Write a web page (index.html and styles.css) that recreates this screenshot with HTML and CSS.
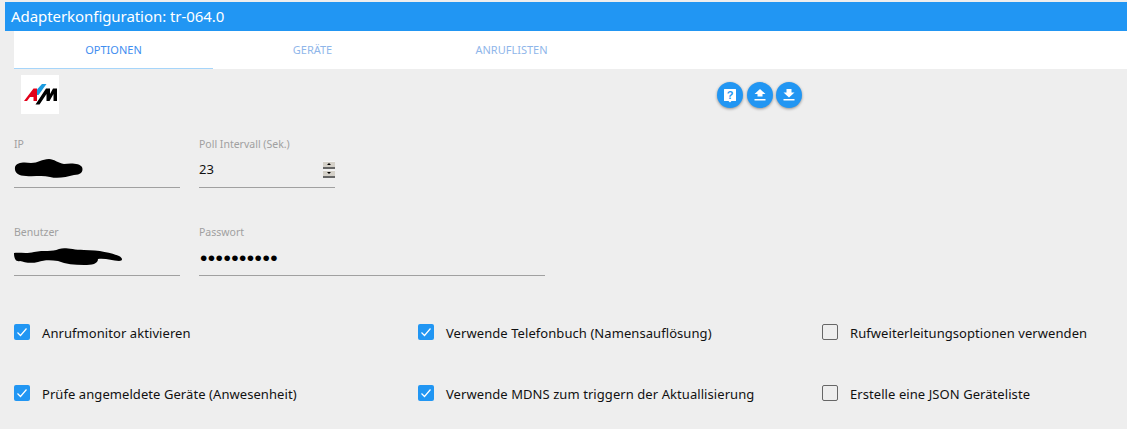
FILE: index.html
```html
<!DOCTYPE html>
<html lang="de">
  <head>
    <meta charset="UTF-8" />
    <title>Adapterkonfiguration: tr-064.0</title>
    <link rel="stylesheet" href="styles.css">
  </head>
  <body>
    <div class="title-bar">Adapterkonfiguration: tr-064.0</div>
    <div class="tabs">
      <div class="tab active">OPTIONEN</div>
      <div class="tab">GERÄTE</div>
      <div class="tab">ANRUFLISTEN</div>
    </div>

    <div class="toolbar">
      <div class="logo">
        <svg width="38" height="39" viewBox="0 0 38 39">
          <polygon points="3,26 12.500,13.500 16,13.500 16,26 12.500,26 12.500,22 9,22 6,26" fill="#e2001a" />
          <polygon points="21,9 25.500,9 17.500,20 16,20 16,14.500" fill="#1b9be0" />
          <polygon points="14.500,29.500 25,13.500 29,13.500 29,19 32,13.500 36,13.500 36,26 32.500,26 32.500,19 28.500,26 25.500,26 25.500,19 18.500,29.500" fill="#000" />
        </svg>
      </div>
      <div class="actions">
        <button class="fab">
          <svg width="14" height="15" viewBox="0 0 14 15">
            <path d="M1.500 1h11a.5.500 0 0 1 .5.500v11a.5.500 0 0 1-.5.500H8.500L7 14.500 5.500 13h-4a.5.500 0 0 1-.5-.5v-11a.5.500 0 0 1 .5-.5z" fill="#fff" />
            <text x="7" y="11" text-anchor="middle" class="help-mark">?</text>
          </svg>
        </button>
        <button class="fab">
          <svg width="14" height="14" viewBox="0 0 14 14">
            <path d="M4.500 8.500V6H1.500L7 1l5.500 5H9.500v2.500zM1.500 11h11v1.500h-11z" fill="#fff" />
          </svg>
        </button>
        <button class="fab">
          <svg width="14" height="14" viewBox="0 0 14 14">
            <path d="M4.500 1h5v3.500h3L7 9.500 1.500 4.500h3zM1.500 11h11v1.500h-11z" fill="#fff" />
          </svg>
        </button>
      </div>
    </div>

    <div class="fields">
      <div class="field w-short">
        <label>IP</label>
        <div class="value">
          <svg class="scribble" width="70" height="22" viewBox="0 0 70 22">
            <path d="M1 9C3 4 10 4 17 5C24 5 28 1 35 1C40 1 44 5 50 6C56 5 66 5 68 9C70 14 66 17 60 17C52 19 44 21 36 19C28 17 20 19 12 18C5 18 0 15 1 9z" fill="#000" />
          </svg>
        </div>
      </div>
      <div class="field w-num">
        <label>Poll Intervall (Sek.)</label>
        <div class="value">
          <span>23</span>
          <span class="spin"><i class="up"></i><i class="down"></i></span>
        </div>
      </div>
      <div class="break"></div>
      <div class="field w-short">
        <label>Benutzer</label>
        <div class="value">
          <svg class="scribble" width="110" height="20" viewBox="0 0 110 20">
            <path d="M0 6C5 5 12 7 20 5C30 3 38 5 45 2C52 0 58 3 70 3C85 3 98 6 105 9C109 11 109 14 105 14C98 14 92 11 84 12C84 17 78 18 70 18C60 18 52 17 44 14C36 13 30 13 24 15C16 17 10 15 6 14C2 15 0 12 0 6z" fill="#000" />
          </svg>
        </div>
      </div>
      <div class="field w-long">
        <label>Passwort</label>
        <div class="value"><span class="dots">••••••••••</span></div>
      </div>
    </div>

    <div class="checks">
      <label class="check"><span class="box on"><svg width="16" height="16" viewBox="0 0 16 16"><path d="M3.500 8.500l3 3 6-7" fill="none" stroke="#fff" stroke-width="1.200" /></svg></span>Anrufmonitor aktivieren</label>
      <label class="check"><span class="box on"><svg width="16" height="16" viewBox="0 0 16 16"><path d="M3.500 8.500l3 3 6-7" fill="none" stroke="#fff" stroke-width="1.200" /></svg></span>Verwende Telefonbuch (Namensauflösung)</label>
      <label class="check"><span class="box"></span>Rufweiterleitungsoptionen verwenden</label>
      <label class="check"><span class="box on"><svg width="16" height="16" viewBox="0 0 16 16"><path d="M3.500 8.500l3 3 6-7" fill="none" stroke="#fff" stroke-width="1.200" /></svg></span>Prüfe angemeldete Geräte (Anwesenheit)</label>
      <label class="check"><span class="box on"><svg width="16" height="16" viewBox="0 0 16 16"><path d="M3.500 8.500l3 3 6-7" fill="none" stroke="#fff" stroke-width="1.200" /></svg></span>Verwende MDNS zum triggern der Aktuallisierung</label>
      <label class="check"><span class="box"></span>Erstelle eine JSON Geräteliste</label>
    </div>
  </body>
</html>
```
FILE: styles.css
```css
body {
  margin: 0;
  padding-top: 2px;
  background: #eeeeee;
  font-family: "Noto Sans", sans-serif;
  color: #111;
}
.title-bar {
  margin-left: 5px;
  height: 29px;
  padding-left: 6px;
  background: #2196f3;
  color: #fff;
  font-size: 15px;
  letter-spacing: -0.06px;
  line-height: 29px;
}
.tabs {
  display: flex;
  margin-left: 14px;
  height: 38px;
  background: #fff;
}
.tab {
  width: 199px;
  text-align: center;
  font-size: 11px;
  line-height: 38px;
  color: #8fb6ea;
}
.tab.active {
  color: #3f8ef0;
  border-bottom: 1px solid #a6d5fa;
  box-sizing: border-box;
}
.toolbar {
  display: flex;
  margin: 6px 0 0 21px;
  height: 39px;
}
.logo {
  width: 38px;
  height: 39px;
  background: #fff;
}
.actions {
  display: flex;
  gap: 3.500px;
  margin: 7px 0 0 658px;
}
.fab {
  width: 26px;
  height: 26px;
  padding: 0;
  border: 0;
  border-radius: 50%;
  background: #2196f3;
  box-shadow: 0 1px 3px rgba(0, 0, 0, 0.4);
  display: flex;
  align-items: center;
  justify-content: center;
}
.help-mark {
  font-family: "Liberation Sans", sans-serif;
  font-size: 11px;
  font-weight: bold;
  fill: #2196f3;
}
.fields {
  display: flex;
  flex-wrap: wrap;
  column-gap: 19px;
  margin: 25px 0 0 14px;
}
.break {
  flex-basis: 100%;
  height: 39px;
}
.field {
  height: 48px;
  border-bottom: 1px solid #a0a0a0;
}
.w-short {
  width: 166px;
}
.w-num {
  width: 136px;
}
.w-long {
  width: 346px;
}
.field label {
  display: block;
  height: 18px;
  font-size: 10.500px;
  line-height: 10px;
  color: #a0a0a0;
}
.value {
  display: flex;
  align-items: center;
  justify-content: space-between;
  height: 24px;
  font-size: 13px;
}
.scribble {
  display: block;
}
.dots {
  padding: 1px 0 0 1px;
  font-size: 21px;
  letter-spacing: 0.45px;
  color: #000;
  font-family: "Liberation Sans", sans-serif;
}
.spin {
  display: flex;
  flex-direction: column;
  gap: 1px;
  width: 12px;
}
.spin i {
  display: block;
  height: 8px;
  background: #d4d0c8;
  position: relative;
  box-sizing: border-box;
  border-top: 1px solid #f4f4f4;
  border-bottom: 2px solid #666;
}
.spin i::after {
  content: "";
  position: absolute;
  left: 4px;
  top: 1px;
  border: 2px solid transparent;
  border-top: 0;
  border-bottom: 2px solid #000;
}
.spin .down::after {
  border-bottom: 0;
  border-top: 2px solid #000;
}
.checks {
  display: grid;
  grid-template-columns: 404px 404px 1fr;
  grid-auto-rows: 20px;
  row-gap: 41px;
  margin: 48px 0 0 14px;
}
.check {
  display: flex;
  align-items: flex-start;
  gap: 12px;
  font-size: 13px;
  letter-spacing: 0.07px;
  line-height: 18px;
}
.box {
  flex: none;
  width: 16px;
  height: 16px;
  box-sizing: border-box;
  border: 1px solid #666;
  border-radius: 2px;
}
.box.on {
  border: 0;
  background: #2196f3;
}
.box svg {
  display: block;
}
```
